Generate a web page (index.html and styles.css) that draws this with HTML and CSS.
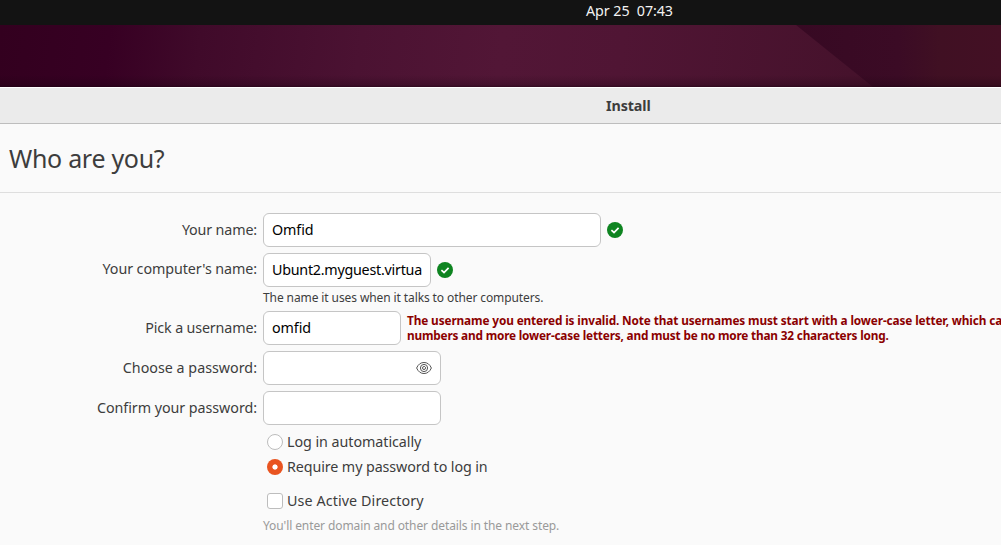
FILE: index.html
```html
<!DOCTYPE html>
<html lang="en">
<head>
<meta charset="utf-8">
<title>Install</title>
<link rel="stylesheet" href="styles.css">
</head>
<body>
<header class="topbar"><span class="clock">Apr 25&nbsp; 07:43</span></header>
<div class="wallpaper">
  <svg width="1001" height="62" viewBox="0 0 1001 62">
    <defs>
      <linearGradient id="fold"><stop offset="0" stop-color="#370923"/><stop offset=".5" stop-color="#3b0b25"/><stop offset=".7" stop-color="#401023"/><stop offset="1" stop-color="#431024"/></linearGradient>
      <linearGradient id="shade" x1="0" y1="0" x2="0" y2="1"><stop offset="0" stop-color="#14000c" stop-opacity="0"/><stop offset=".8" stop-color="#14000c" stop-opacity=".22"/><stop offset="1" stop-color="#14000c" stop-opacity=".5"/></linearGradient>
    </defs>
    <path d="M796 0H1001V62H873Z" fill="url(#fold)"/>
    <rect y="50" width="1001" height="12" fill="url(#shade)"/>
  </svg>
</div>
<main class="window">
  <div class="titlebar"><span class="title">Install</span></div>
  <div class="page-head"><h1 class="heading">Who are you?</h1></div>
  <form class="form">
    <div class="row">
      <label class="label"><span class="l-name">Your name:</span></label>
      <div class="entry entry-name"><span class="v-name">Omfid</span></div>
      <svg class="ok" viewBox="0 0 16 16"><circle cx="8" cy="8" r="8" fill="#0e8420"/><path d="M4.4 8.2L7 10.5L11.6 5.9" fill="none" stroke="#fff" stroke-width="1.7"/></svg>
    </div>
    <div class="row">
      <label class="label label-up"><span class="l-host">Your computer's name:</span></label>
      <div class="entry entry-host"><span class="v-host">Ubunt2.myguest.virtua</span></div>
      <svg class="ok" viewBox="0 0 16 16"><circle cx="8" cy="8" r="8" fill="#0e8420"/><path d="M4.4 8.2L7 10.5L11.6 5.9" fill="none" stroke="#fff" stroke-width="1.7"/></svg>
    </div>
    <p class="hint"><span class="t-hint">The name it uses when it talks to other computers.</span></p>
    <div class="row">
      <label class="label"><span class="l-user">Pick a username:</span></label>
      <div class="entry entry-user"><span class="v-user">omfid</span></div>
      <p class="error"><span class="e-one">The username you entered is invalid. Note that usernames must start with a lower-case letter, which ca</span><br><span class="e-two">numbers and more lower-case letters, and must be no more than 32 characters long.</span></p>
    </div>
    <div class="row">
      <label class="label"><span class="l-pass">Choose a password:</span></label>
      <div class="entry entry-pass">
        <svg class="eye" viewBox="0 0 16 14" fill="none" stroke="#555"><path d="M.6 7C2.3 3.2 4.8 1.5 8 1.5S13.700 3.200 15.400 7C13.700 10.800 11.200 12.500 8 12.500S2.300 10.800.6 7Z"/><circle cx="8" cy="7" r="3.600"/><circle cx="8" cy="7" r="1.500"/><path d="M8 7L9.500 5.500" stroke="#fff"/></svg>
      </div>
    </div>
    <div class="row">
      <label class="label"><span class="l-confirm">Confirm your password:</span></label>
      <div class="entry entry-pass"></div>
    </div>
    <div class="choices">
      <label class="choice"><i class="radio"></i><span class="c-auto">Log in automatically</span></label>
      <label class="choice"><i class="radio radio-on"></i><span class="c-req">Require my password to log in</span></label>
      <label class="choice choice-ad"><i class="check"></i><span class="c-ad">Use Active Directory</span></label>
    </div>
    <p class="hint hint-off"><span class="t-ad">You'll enter domain and other details in the next step.</span></p>
  </form>
</main>
</body>
</html>
```
FILE: styles.css
```css
* { box-sizing: border-box; }
body { margin: 0; width: 1001px; height: 545px; overflow: hidden; background: #fafafa; color: #3d3d3d; font: 14.3px/20px "Noto Sans", sans-serif; white-space: nowrap; }
p, h1 { margin: 0; }
.topbar { height: 25px; background: #131313; color: #f2f2f2; padding: 1px 0 0 586px; }
.clock { letter-spacing: -.07px; }
.wallpaper { height: 62px; background: linear-gradient(97deg, #33001f 0, #370023 110px, #400a2a 200px, #4b1232 360px, #521636 500px, #501534 620px, #46122c 850px, #431024 1001px); }
.wallpaper svg { display: block; }
.titlebar { height: 37px; background: #ebebeb; border-top: 1px solid #fff; border-bottom: 1px solid #bdbdbd; padding: 8px 0 0 606px; font-weight: 700; }
.title { letter-spacing: -.1px; }
.page-head { height: 69px; border-bottom: 1px solid #dedede; padding: 16px 0 0 9px; }
.heading { font-size: 25px; line-height: 36px; font-weight: 400; letter-spacing: -.3px; }
.form { display: flex; flex-direction: column; padding-top: 20px; }
.row { display: flex; align-items: center; gap: 6px; height: 34px; margin-bottom: 6px; }
.label { width: 257px; text-align: right; flex: none; }
.label-up { padding-bottom: 2px; }
.l-name, .l-user { letter-spacing: -.15px; }
.l-host { letter-spacing: -.08px; }
.l-confirm { letter-spacing: -.05px; }
.entry { display: flex; align-items: center; height: 34px; border: 1px solid #c5c5c5; border-radius: 6px; background: #fff; padding: 0 8px; color: #000; flex: none; }
.entry-name { width: 338px; }
.entry-host { width: 168px; }
.entry-user { width: 138px; }
.entry-pass { width: 178px; justify-content: flex-end; }
.v-host { letter-spacing: -.25px; }
.v-name, .v-user { letter-spacing: -.1px; }
.ok { width: 16px; height: 16px; }
.eye { width: 16px; height: 14px; }
.hint { font-size: 12px; line-height: 18px; height: 18px; padding-left: 263px; }
.row + .hint { margin-top: -4px; margin-bottom: 4px; }
.t-hint, .t-ad { letter-spacing: -.1px; }
.hint-off { color: #999; padding-top: 1px; margin-top: 3px; }
.error { color: #8b0000; font-size: 11.8px; line-height: 15px; font-weight: 700; }
.e-one { letter-spacing: -.12px; }
.e-two { letter-spacing: -.185px; }
.choices { display: flex; flex-direction: column; margin-top: -2px; padding-left: 267px; }
.choice { display: flex; align-items: center; gap: 4px; height: 25px; }
.choice-ad { margin-top: 9px; }
.c-auto { letter-spacing: -.05px; }
.c-req { letter-spacing: -.1px; }
.c-ad { letter-spacing: .1px; }
.radio, .check { width: 16px; height: 16px; border: 1px solid #bdbdbd; border-radius: 50%; background: #fff; }
.check { border-radius: 3px; }
.radio-on { border: none; background: radial-gradient(circle, #fff 2.2px, #e95420 3px); }
```
